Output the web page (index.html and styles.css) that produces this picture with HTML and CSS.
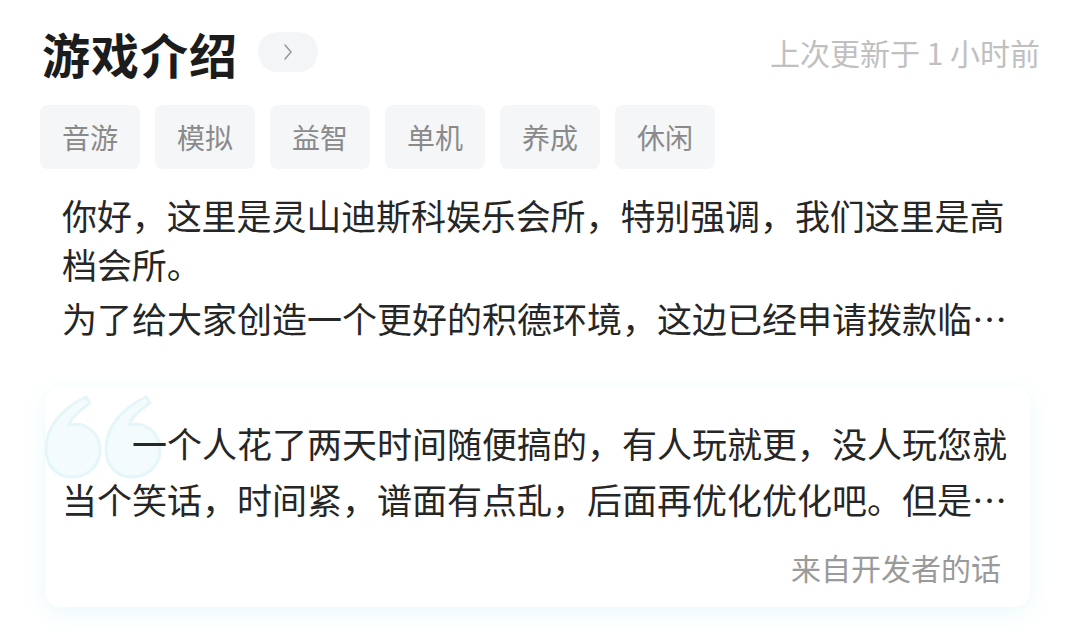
FILE: index.html
```html
<!DOCTYPE html>
<html lang="zh-CN">
<head>
<meta charset="utf-8">
<title>游戏介绍</title>
<link rel="stylesheet" href="styles.css">
</head>
<body>
<div class="page">
  <header class="head">
    <div class="head-left">
      <h1 class="title">游戏介绍</h1>
      <span class="more">
        <svg width="10" height="18" viewBox="0 0 10 18"><path d="M2 2 L8 9 L2 16" fill="none" stroke="#9a9a9a" stroke-width="1.6" stroke-linecap="round" stroke-linejoin="round"/></svg>
      </span>
    </div>
    <div class="updated">上次更新于 1 小时前</div>
  </header>

  <div class="tags">
    <span class="tag">音游</span>
    <span class="tag">模拟</span>
    <span class="tag">益智</span>
    <span class="tag">单机</span>
    <span class="tag">养成</span>
    <span class="tag">休闲</span>
  </div>

  <div class="desc">
    <p class="desc-p">你好，这里是灵山迪斯科娱乐会所，特别强调，我们这里是高档会所。</p>
    <p class="desc-p desc-last">为了给大家创造一个更好的积德环境，这边已经申请拨款临时增加服务器，欢迎大家前来游玩。</p>
  </div>

  <div class="quote-card">
    <svg class="quote-mark" width="130" height="100" viewBox="0 0 130 100">
      <g fill="#f4fbfc" stroke="#e5f6f8" stroke-width="3">
        <path d="M32 90 C16 90 6 78 6 62 C6 42 20 22 46 10 L50 16 C36 26 30 34 29 38 C46 34 60 46 60 63 C60 78 48 90 32 90 Z"/>
        <path d="M92 90 C76 90 66 78 66 62 C66 42 80 22 106 10 L110 16 C96 26 90 34 89 38 C106 34 120 46 120 63 C120 78 108 90 92 90 Z"/>
      </g>
    </svg>
    <p class="quote-text">一个人花了两天时间随便搞的，有人玩就更，没人玩您就当个笑话，时间紧，谱面有点乱，后面再优化优化吧。但是希望大家玩得开心。</p>
    <div class="quote-from">来自开发者的话</div>
  </div>
</div>
</body>
</html>
```

FILE: styles.css
```css
* { box-sizing: border-box; }
html, body { margin: 0; padding: 0; background: #ffffff; }
body {
  font-family: "Noto Sans CJK SC", "Noto Sans", sans-serif;
  color: #262626;
  width: 1080px;
  height: 637px;
  overflow: hidden;
}
.page { padding: 0 40px; }

.head {
  height: 105px;
  display: flex;
  align-items: center;
  justify-content: space-between;
}
.head-left { display: flex; align-items: center; gap: 20px; padding-left: 2px; }
.title {
  margin: 0;
  font-size: 48px;
  line-height: 60px;
  font-weight: 700;
  color: #1c1c1c;
  letter-spacing: 1px;
}
.more {
  width: 60px;
  height: 40px;
  border-radius: 20px;
  background: #f3f5f6;
  display: flex;
  align-items: center;
  justify-content: center;
  margin-top: -2px;
}
.updated {
  font-size: 30px;
  color: #c0c0c0;
  line-height: 40px;
  margin-top: -2px;
}

.tags { display: flex; gap: 15px; }
.tag {
  width: 100px;
  height: 64px;
  border-radius: 8px;
  background: #f4f6f8;
  color: #8a8a8a;
  font-size: 28px;
  display: flex;
  align-items: center;
  justify-content: center;
}

.desc { margin-top: 21px; padding-left: 22px; width: 972px; }
.desc-p {
  margin: 0;
  font-size: 35px;
  line-height: 49px;
  color: #262626;
}
.desc-p:first-child { letter-spacing: -0.1px; }
.desc-last {
  margin-top: 5px;
  white-space: nowrap;
  overflow: hidden;
  text-overflow: ellipsis;
}

.quote-card {
  position: relative;
  margin: 45px 10px 0 5px;
  padding: 28px 15px 20px 17px;
  border-radius: 16px;
  background: #ffffff;
  box-shadow: 0 6px 22px rgba(90, 200, 210, 0.12);
}
.quote-mark {
  position: absolute;
  left: -5px;
  top: 0;
}
.quote-text {
  position: relative;
  margin: 0;
  font-size: 35px;
  line-height: 56px;
  height: 112px;
  text-indent: 2em;
  color: #262626;
  display: -webkit-box;
  -webkit-line-clamp: 2;
  -webkit-box-orient: vertical;
  overflow: hidden;
}
.quote-from {
  margin-top: 20px;
  text-align: right;
  padding-right: 14px;
  font-size: 30px;
  line-height: 40px;
  color: #9a9a9a;
}
```
